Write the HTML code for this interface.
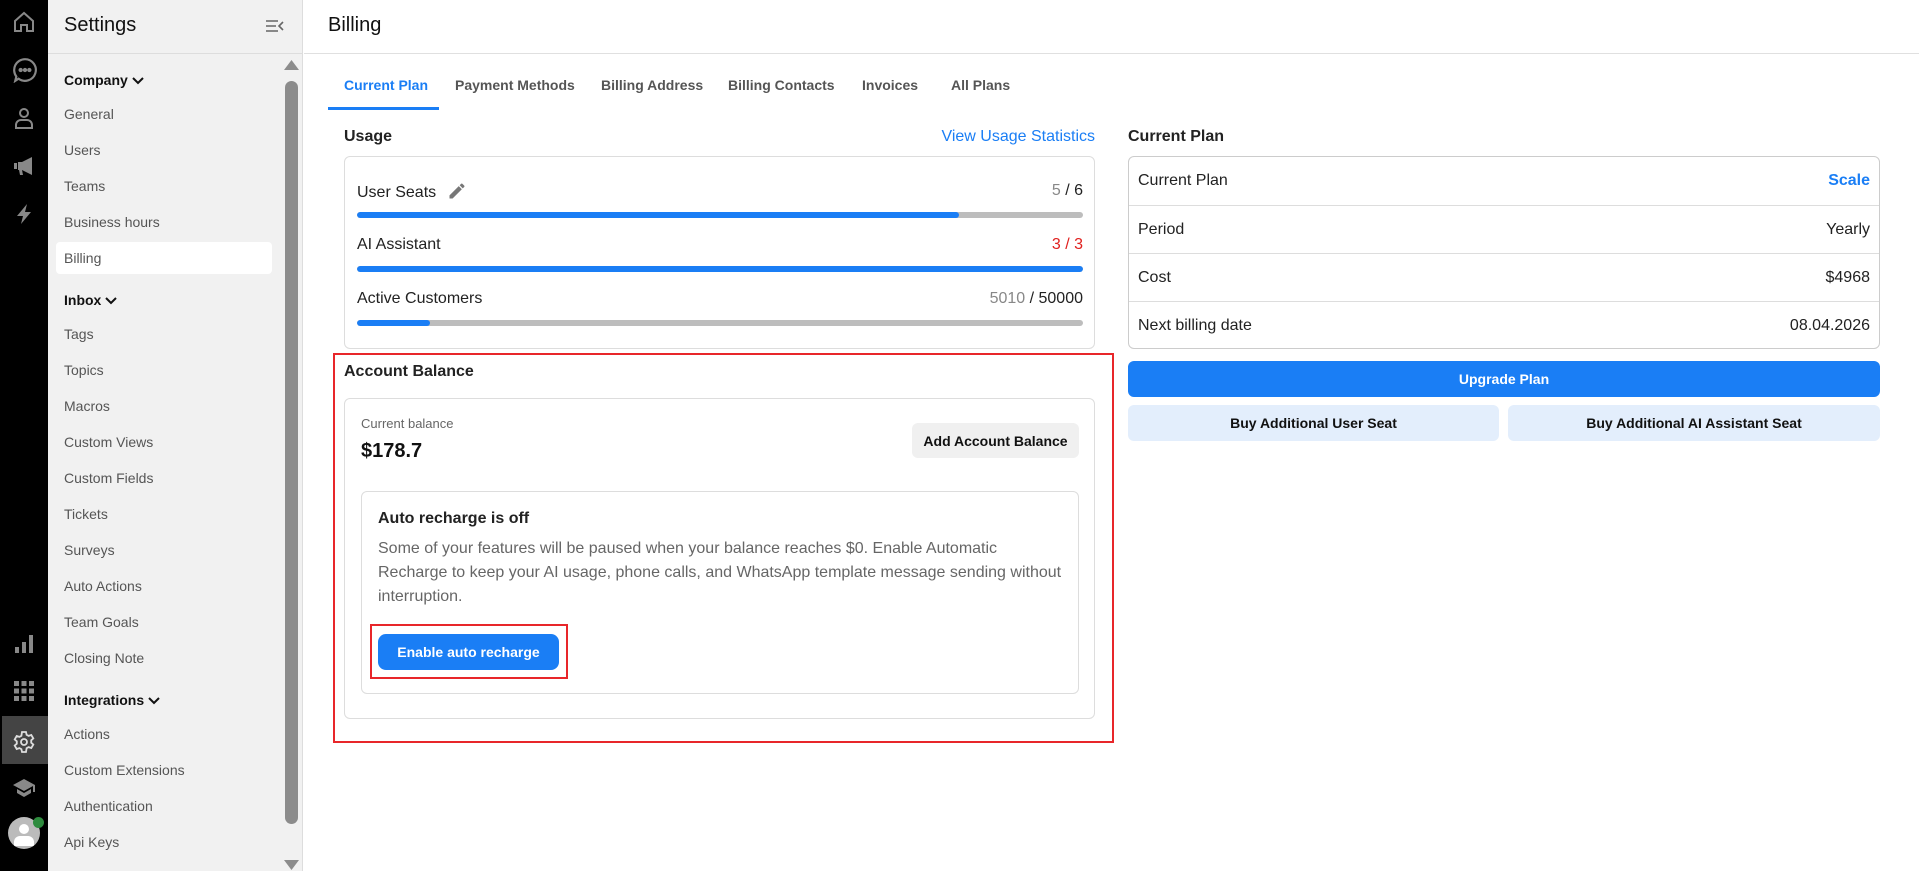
<!DOCTYPE html>
<html><head><meta charset="utf-8"><style>
*{box-sizing:border-box;margin:0;padding:0}
body{width:1919px;height:871px;overflow:hidden;font-family:"Liberation Sans",Arial,sans-serif;background:#fff;position:relative;color:#111}
.a{position:absolute}
.rail{left:0;top:0;width:48px;height:871px;background:#000}
.side{left:48px;top:0;width:255px;height:871px;background:#f1f1f1;border-right:1px solid #ddd}
.nav{position:absolute;left:64px;font-size:14px;color:#555;line-height:18px;transform:translateY(-9px)}
.grp{position:absolute;left:64px;font-size:14px;font-weight:bold;color:#111;line-height:18px;transform:translateY(-9px)}
.grp svg{vertical-align:middle;margin-left:4px}
.tab{position:absolute;top:77px;font-size:14px;font-weight:bold;color:#555}
.lbl{position:absolute;font-size:16px;color:#222;line-height:20px;transform:translateY(-10px)}
.bar{position:absolute;left:357px;width:726px;height:6px;border-radius:3px;background:#bdbdbd;overflow:hidden}
.bar i{display:block;height:100%;background:#1a7ef5;border-radius:3px}
.row{position:absolute;left:0;right:0;height:48px;border-top:1px solid #ddd;display:flex;justify-content:space-between;align-items:center;padding:0 9px;font-size:16px;color:#222}
svg.ic{position:absolute;left:12px}
</style></head><body>
<div class="a rail"></div>
<svg class="ic" style="top:10px" width="24" height="24" viewBox="0 0 24 24" fill="none" stroke="#888" stroke-width="2"><path d="M3 11 12 3l9 8v10h-6v-6h-6v6H3z"/></svg>
<svg class="ic" style="top:57px" width="26" height="26" viewBox="0 0 24 24" fill="none" stroke="#888" stroke-width="2"><path d="M12 2a10 10 0 1 1-6 18l-3 2 1-4A10 10 0 0 1 12 2z"/><circle cx="8" cy="12" r="1" fill="#888"/><circle cx="12" cy="12" r="1" fill="#888"/><circle cx="16" cy="12" r="1" fill="#888"/></svg>
<svg class="ic" style="top:106px" width="24" height="24" viewBox="0 0 24 24" fill="none" stroke="#888" stroke-width="2"><circle cx="12" cy="7" r="4"/><path d="M4 22v-3a5 5 0 0 1 5-5h6a5 5 0 0 1 5 5v3z"/></svg>
<svg class="ic" style="top:154px" width="24" height="24" viewBox="0 0 24 24" fill="#888"><path d="M2 9h3v6H2zM6 8h4l10-5v18l-10-5H6zM7 16h3l1 5H8z"/></svg>
<svg class="ic" style="top:202px" width="24" height="24" viewBox="0 0 24 24" fill="#888"><path d="M15 2 5 14h6l-2 8 10-12h-6z"/></svg>
<svg class="ic" style="top:632px" width="24" height="24" viewBox="0 0 24 24" fill="#888"><rect x="3" y="15" width="4" height="6"/><rect x="10" y="10" width="4" height="11"/><rect x="17" y="3" width="4" height="18"/></svg>
<svg class="ic" style="top:679px" width="24" height="24" viewBox="0 0 24 24" fill="#888"><rect x="2" y="2" width="5" height="5"/><rect x="9.5" y="2" width="5" height="5"/><rect x="17" y="2" width="5" height="5"/><rect x="2" y="9.5" width="5" height="5"/><rect x="9.5" y="9.5" width="5" height="5"/><rect x="17" y="9.5" width="5" height="5"/><rect x="2" y="17" width="5" height="5"/><rect x="9.5" y="17" width="5" height="5"/><rect x="17" y="17" width="5" height="5"/></svg>
<div class="a" style="left:2px;top:716px;width:46px;height:48px;background:#444"></div>
<svg class="ic" style="top:730px" width="24" height="24" viewBox="0 0 24 24" fill="none" stroke="#ddd" stroke-width="1.8"><circle cx="12" cy="12" r="3"/><path d="M10 2h4l.6 2.8 2 1.1 2.7-.9 2 3.4-2.1 1.9v2.4l2.1 1.9-2 3.4-2.7-.9-2 1.1L14 22h-4l-.6-2.8-2-1.1-2.7.9-2-3.4 2.1-1.9v-2.4L2.7 9.4l2-3.4 2.7.9 2-1.1z"/></svg>
<svg class="ic" style="top:776px" width="24" height="24" viewBox="0 0 24 24" fill="#888"><path d="M12 3 1 9l11 6 9-5v6h2V9zM5 13v4l7 4 7-4v-4l-7 4z"/></svg>
<div class="a" style="left:8px;top:817px;width:32px;height:32px;border-radius:50%;background:#bbb;overflow:hidden"><div class="a" style="left:11px;top:7px;width:10px;height:10px;border-radius:50%;background:#fff"></div><div class="a" style="left:6px;top:19px;width:20px;height:10px;border-radius:6px 6px 0 0;background:#fff"></div></div>
<div class="a" style="left:33px;top:817px;width:11px;height:11px;border-radius:50%;background:#2e8b3e"></div>

<div class="a side"></div>
<div class="a" style="left:48px;top:53px;width:255px;height:1px;background:#ddd"></div>
<div class="a" style="left:64px;top:14px;font-size:20px;font-weight:500;color:#111">Settings</div>
<svg class="a" style="left:265px;top:19px" width="20" height="14" viewBox="0 0 20 14" fill="none" stroke="#666" stroke-width="1.6"><path d="M1 2h12M1 7h10M1 12h12M18 3l-4 4 4 4"/></svg>
<div class="a" style="left:285px;top:81px;width:13px;height:743px;border-radius:7px;background:#8c8c8c"></div>
<svg class="a" style="left:284px;top:60px" width="15" height="10"><path d="M0 10 7.5 0 15 10z" fill="#8c8c8c"/></svg>
<svg class="a" style="left:284px;top:860px" width="15" height="10"><path d="M0 0h15L7.5 10z" fill="#8c8c8c"/></svg>
<div class="a" style="left:56px;top:242px;width:216px;height:32px;background:#fff;border-radius:4px"></div>
<div class="grp" style="top:80px">Company<svg width="12" height="8"><path d="M1 1l5 5 5-5" stroke="#111" stroke-width="2" fill="none"/></svg></div>
<div class="nav" style="top:114px">General</div>
<div class="nav" style="top:150px">Users</div>
<div class="nav" style="top:186px">Teams</div>
<div class="nav" style="top:222px">Business hours</div>
<div class="nav" style="top:258px">Billing</div>
<div class="grp" style="top:300px">Inbox<svg width="12" height="8"><path d="M1 1l5 5 5-5" stroke="#111" stroke-width="2" fill="none"/></svg></div>
<div class="nav" style="top:334px">Tags</div>
<div class="nav" style="top:370px">Topics</div>
<div class="nav" style="top:406px">Macros</div>
<div class="nav" style="top:442px">Custom Views</div>
<div class="nav" style="top:478px">Custom Fields</div>
<div class="nav" style="top:514px">Tickets</div>
<div class="nav" style="top:550px">Surveys</div>
<div class="nav" style="top:586px">Auto Actions</div>
<div class="nav" style="top:622px">Team Goals</div>
<div class="nav" style="top:658px">Closing Note</div>
<div class="grp" style="top:700px">Integrations<svg width="12" height="8"><path d="M1 1l5 5 5-5" stroke="#111" stroke-width="2" fill="none"/></svg></div>
<div class="nav" style="top:734px">Actions</div>
<div class="nav" style="top:770px">Custom Extensions</div>
<div class="nav" style="top:806px">Authentication</div>
<div class="nav" style="top:842px">Api Keys</div>

<div class="a" style="left:304px;top:53px;width:1615px;height:1px;background:#e0e0e0"></div>
<div class="a" style="left:328px;top:14px;font-size:20px;color:#111">Billing</div>
<div class="tab" style="left:344px;color:#1a7ef5">Current Plan</div>
<div class="tab" style="left:455px">Payment Methods</div>
<div class="tab" style="left:601px">Billing Address</div>
<div class="tab" style="left:728px">Billing Contacts</div>
<div class="tab" style="left:862px">Invoices</div>
<div class="tab" style="left:951px">All Plans</div>
<div class="a" style="left:328px;top:107px;width:111px;height:3px;background:#1a7ef5"></div>

<div class="lbl" style="left:344px;top:137px;font-weight:bold">Usage</div>
<div class="lbl" style="right:824px;top:137px;color:#1a7ef5">View Usage Statistics</div>
<div class="a" style="left:344px;top:156px;width:751px;height:193px;border:1px solid #ddd;border-radius:6px"></div>
<div class="lbl" style="left:357px;top:191px">User Seats <svg width="20" height="20" viewBox="0 0 24 24" style="vertical-align:-4px;margin-left:6px"><path d="M3 17.3V21h3.7L17.8 9.9l-3.7-3.7zM20.7 7a1 1 0 0 0 0-1.4l-2.3-2.3a1 1 0 0 0-1.4 0l-1.8 1.8 3.7 3.7z" fill="#777"/></svg></div>
<div class="lbl" style="right:836px;top:191px"><span style="color:#888">5</span> / 6</div>
<div class="bar" style="top:212px"><i style="width:602px"></i></div>
<div class="lbl" style="left:357px;top:245px">AI Assistant</div>
<div class="lbl" style="right:836px;top:245px;color:#e0201e">3 / 3</div>
<div class="bar" style="top:266px"><i style="width:100%"></i></div>
<div class="lbl" style="left:357px;top:299px">Active Customers</div>
<div class="lbl" style="right:836px;top:299px"><span style="color:#888">5010</span> / 50000</div>
<div class="bar" style="top:320px"><i style="width:73px"></i></div>

<div class="a" style="left:333px;top:353px;width:781px;height:390px;border:2px solid #e8262a"></div>
<div class="lbl" style="left:344px;top:372px;font-weight:bold">Account Balance</div>
<div class="a" style="left:344px;top:398px;width:751px;height:321px;border:1px solid #ddd;border-radius:6px"></div>
<div class="a" style="left:361px;top:416px;font-size:13px;color:#666">Current balance</div>
<div class="a" style="left:361px;top:440px;font-size:20px;font-weight:bold;color:#111">$178.7</div>
<div class="a" style="left:912px;top:423px;width:167px;height:35px;background:#f0f0f0;border-radius:6px;font-size:14px;font-weight:bold;display:flex;align-items:center;justify-content:center">Add Account Balance</div>
<div class="a" style="left:361px;top:491px;width:718px;height:203px;border:1px solid #ddd;border-radius:6px"></div>
<div class="lbl" style="left:378px;top:519px;font-weight:bold">Auto recharge is off</div>
<div class="a" style="left:378px;top:537px;width:700px;font-size:16px;line-height:24px;color:#666;white-space:nowrap">Some of your features will be paused when your balance reaches $0. Enable Automatic<br>Recharge to keep your AI usage, phone calls, and WhatsApp template message sending without<br>interruption.</div>
<div class="a" style="left:370px;top:624px;width:198px;height:55px;border:2px solid #e8262a"></div>
<div class="a" style="left:378px;top:634px;width:181px;height:36px;background:#1a7ef5;border-radius:8px;color:#fff;font-size:14px;font-weight:bold;display:flex;align-items:center;justify-content:center">Enable auto recharge</div>

<div class="lbl" style="left:1128px;top:137px;font-weight:bold">Current Plan</div>
<div class="a" style="left:1128px;top:156px;width:752px;height:193px;border:1px solid #ccc;border-radius:6px;overflow:hidden">
<div class="row" style="top:0;border-top:0"><span>Current Plan</span><span style="color:#1a7ef5;font-weight:bold">Scale</span></div>
<div class="row" style="top:48px"><span>Period</span><span>Yearly</span></div>
<div class="row" style="top:96px"><span>Cost</span><span>$4968</span></div>
<div class="row" style="top:144px"><span>Next billing date</span><span>08.04.2026</span></div>
</div>
<div class="a" style="left:1128px;top:361px;width:752px;height:36px;background:#1a7ef5;border-radius:6px;color:#fff;font-size:14px;font-weight:bold;display:flex;align-items:center;justify-content:center">Upgrade Plan</div>
<div class="a" style="left:1128px;top:405px;width:371px;height:36px;background:#e3eefc;border-radius:6px;font-size:14px;font-weight:bold;display:flex;align-items:center;justify-content:center">Buy Additional User Seat</div>
<div class="a" style="left:1508px;top:405px;width:372px;height:36px;background:#e3eefc;border-radius:6px;font-size:14px;font-weight:bold;display:flex;align-items:center;justify-content:center">Buy Additional AI Assistant Seat</div>
</body></html>
